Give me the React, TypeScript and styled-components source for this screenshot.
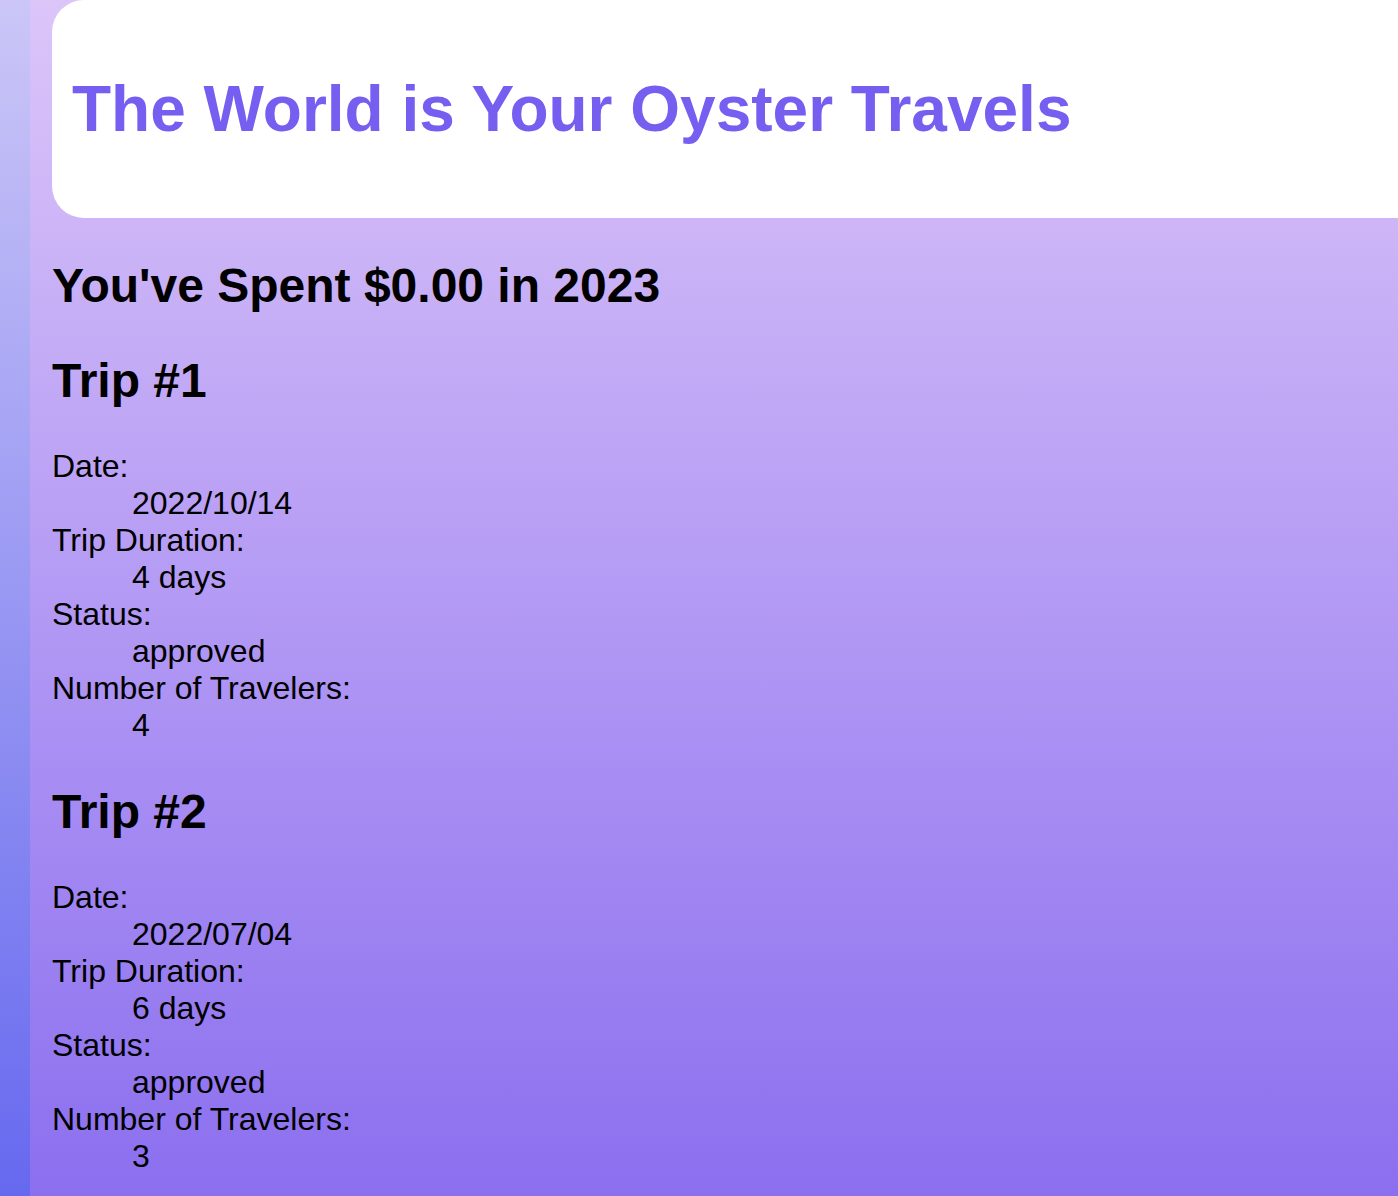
import React from "react";
import styled, { createGlobalStyle } from "styled-components";

const GlobalStyle = createGlobalStyle`
  html, body {
    margin: 0;
    padding: 0;
    overflow-x: hidden;
  }
  body {
    font-family: "Liberation Sans", Arial, Helvetica, sans-serif;
    font-size: 32px;
    color: #000;
    background: linear-gradient(180deg, #cbc6f7 0%, #6669ef 100%) fixed;
    min-height: 100vh;
  }
`;

const Page = styled.main`
  margin: 16px 0 0 30px;
  padding: 0 22px 1px 22px;
  background: linear-gradient(180deg, #dcc5f9 0%, #8a6eef 100%);
  min-height: calc(100vh - 16px);
`;

const Header = styled.header`
  margin: -16px -80px 0 0;
  padding: 29px 20px;
  background: #ffffff;
  border-radius: 32px;
`;

const Title = styled.h1`
  margin: 43px 0;
  font-size: 64px;
  font-weight: bold;
  color: #765ef0;
`;

const Heading = styled.h2`
  margin: 40px 0;
  font-size: 48px;
  font-weight: bold;
`;

const Details = styled.dl`
  margin: 32px 0;
  line-height: 37px;
`;

const Term = styled.dt`
  margin: 0;
`;

const Value = styled.dd`
  margin: 0 0 0 80px;
`;

type Trip = {
  date: string;
  duration: string;
  status: string;
  travelers: number;
};

const trips: Trip[] = [
  { date: "2022/10/14", duration: "4 days", status: "approved", travelers: 4 },
  { date: "2022/07/04", duration: "6 days", status: "approved", travelers: 3 },
];

export default function App() {
  return (
    <>
      <GlobalStyle />
      <Page>
        <Header>
          <Title>The World is Your Oyster Travels</Title>
        </Header>
        <Heading>You've Spent $0.00 in 2023</Heading>
        {trips.map((t, i) => (
          <section key={i}>
            <Heading>Trip #{i + 1}</Heading>
            <Details>
              <Term>Date:</Term>
              <Value>{t.date}</Value>
              <Term>Trip Duration:</Term>
              <Value>{t.duration}</Value>
              <Term>Status:</Term>
              <Value>{t.status}</Value>
              <Term>Number of Travelers:</Term>
              <Value>{t.travelers}</Value>
            </Details>
          </section>
        ))}
      </Page>
    </>
  );
}
